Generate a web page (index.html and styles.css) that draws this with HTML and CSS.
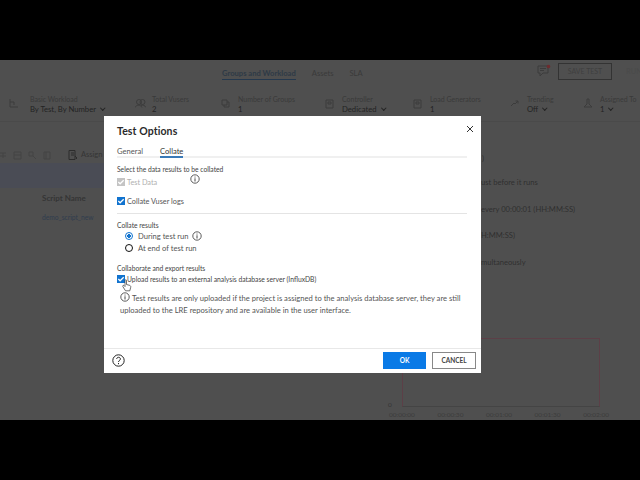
FILE: index.html
```html
<!DOCTYPE html>
<html lang="en">
<head>
<meta charset="utf-8">
<title>Test Options</title>
<link rel="stylesheet" href="styles.css">
</head>
<body>
<div class="frame">
  <div class="letterbox"></div>
  <main class="app">
    <header class="topbar">
      <nav class="nav">
        <span class="nav-item nav-active">Groups and Workload</span>
        <span class="nav-item">Assets</span>
        <span class="nav-item">SLA</span>
      </nav>
      <div class="top-actions">
        <svg class="chat" width="16" height="14" viewBox="0 0 16 14"><path class="ln" d="M1 2h10v7H6l-3 3V9H1z"/><path class="ln" d="M3 4.500h6M3 6.500h4" stroke-width=".7"/><circle cx="11.500" cy="2.500" r="1.800" fill="#6e2b2e"/></svg>
        <span class="save">SAVE TEST</span>
        <span class="more">RUN</span>
      </div>
    </header>
    <section class="summary">
      <div class="stat stat-a"><svg width="9" height="9" viewBox="0 0 9 9"><path class="ln" d="M1 0v8h8M1 3h4v3"/></svg><div><small>Basic Workload</small><b>By Test, By Number<i class="chev"></i></b></div></div>
      <div class="stat stat-b"><svg width="11" height="9" viewBox="0 0 11 9"><circle class="ln" cx="4" cy="3" r="2.500"/><circle class="ln" cx="7.500" cy="3" r="2.500"/><path class="ln" d="M0 8.500c1-3 6-3 7 0M6 6.500c2-1 4 0 5 2"/></svg><div><small>Total Vusers</small><b>2</b></div></div>
      <div class="stat stat-c"><svg width="9" height="9" viewBox="0 0 9 9"><path class="ln" d="M1 1h5v5H1zM3 6v2h5V3H6"/></svg><div><small>Number of Groups</small><b>1</b></div></div>
      <div class="stat stat-d"><svg width="9" height="10" viewBox="0 0 9 10"><path class="ln" d="M1 1h7v8H1zM3 3h3v2H3z"/></svg><div><small>Controller</small><b>Dedicated<i class="chev"></i></b></div></div>
      <div class="stat stat-e"><svg width="9" height="10" viewBox="0 0 9 10"><path class="ln" d="M1 1h7v8H1zM3 3h3v2H3z"/></svg><div><small>Load Generators</small><b>1</b></div></div>
      <div class="stat stat-f"><svg width="9" height="9" viewBox="0 0 9 9"><path class="ln" d="M1 7l3-3 1 1 3-3M5.500 2H8v2.500"/></svg><div><small>Trending</small><b>Off<i class="chev"></i></b></div></div>
      <div class="stat stat-g"><svg width="10" height="11" viewBox="0 0 10 11"><path class="ln" d="M4 1h2v5l3 3H1l3-3z"/></svg><div><small>Assigned To</small><b>1<i class="chev"></i></b></div></div>
    </section>
    <section class="workspace">
      <div class="left-pane">
        <div class="tools">
          <svg class="tool-faint" width="55" height="9" viewBox="0 0 55 9"><path class="ln" d="M0 2h6M0 5h6M3 2v5M14 1h7v7h-7zM14 4h7M29 1h4v4h-4zM33 5l3 3M44 1h6v7h-6zM46 1v7"/></svg>
          <svg class="tool-icon" width="10" height="10" viewBox="0 0 10 10"><path class="ln ln-strong" d="M1 0.500h6v9H1zM3 3h3M3 5h3M7 6l2 2-1 1"/></svg>
          <span class="assign">Assign LG</span>
        </div>
        <div class="band"></div>
        <div class="th">Script Name</div>
        <div class="td">demo_script_new</div>
      </div>
      <div class="right-pane">
        <p class="line l1">)</p>
        <p class="line l2">ust before it runs</p>
        <p class="line l3">every 00:00:01 (HH:MM:SS)</p>
        <p class="line l4">H:MM:SS)</p>
        <p class="line l5">multaneously</p>
        <div class="chart-box">
          <span class="zero">0</span>
          <div class="plot"></div>
          <div class="axis"><span>00:00:00</span><span>00:00:30</span><span>00:01:00</span><span>00:01:30</span><span>00:02:00</span></div>
        </div>
      </div>
    </section>
  </main>
  <div class="letterbox"></div>

  <div class="modal">
    <div class="modal-head">
      <h1>Test Options</h1>
      <svg class="close" width="8" height="8" viewBox="0 0 8 8"><path d="M1 1l6 6M7 1L1 7" stroke="#333" stroke-width="1"/></svg>
    </div>
    <div class="tabs"><span class="tab">General</span><span class="tab tab-on">Collate</span></div>
    <div class="modal-body">
      <p class="label">Select the data results to be collated</p>
      <div class="row row-test"><span class="check check-off"><svg width="8" height="8" viewBox="0 0 9 9"><path d="M1.500 4.500l2 2 4-4" fill="none" stroke="#fff" stroke-width="1.400"/></svg></span><span class="muted">Test Data</span>
        <svg class="info info-test" width="10" height="10" viewBox="0 0 10 10"><circle cx="5" cy="5" r="4.200" fill="none" stroke="#333" stroke-width=".8"/><path d="M5 2.600v.9M5 4.300v3.200" stroke="#333" stroke-width=".9"/></svg></div>
      <div class="row row-logs"><span class="check"><svg width="8" height="8" viewBox="0 0 9 9"><path d="M1.500 4.500l2 2 4-4" fill="none" stroke="#fff" stroke-width="1.400"/></svg></span><span>Collate Vuser logs</span></div>
      <hr class="rule">
      <p class="label">Collate results</p>
      <div class="radios">
        <div class="radio-row"><span class="radio radio-on"></span><span>During test run</span><svg class="info info-run" width="10" height="10" viewBox="0 0 10 10"><circle cx="5" cy="5" r="4.200" fill="none" stroke="#333" stroke-width=".8"/><path d="M5 2.600v.9M5 4.300v3.200" stroke="#333" stroke-width=".9"/></svg></div>
        <div class="radio-row"><span class="radio"></span><span>At end of test run</span></div>
      </div>
      <p class="label label-collab">Collaborate and export results</p>
      <div class="row row-upload"><span class="check"><svg width="8" height="8" viewBox="0 0 9 9"><path d="M1.500 4.500l2 2 4-4" fill="none" stroke="#fff" stroke-width="1.400"/></svg></span><span class="upload-text">Upload results to an external analysis database server (InfluxDB)</span>
        <svg class="cursor" width="10" height="13" viewBox="0 0 10 13"><path d="M3 1.500c0-1 1.500-1 1.500 0v4l3 .8c1 .3 1.500 1 1.200 2l-.9 3.500H3.500L.8 7.500c-.5-.9.6-1.600 1.300-.9l.9.9z" fill="#fff" stroke="#333" stroke-width=".7"/></svg></div>
      <p class="note"><svg class="note-icon" width="10" height="10" viewBox="0 0 10 10"><circle cx="5" cy="5" r="4.200" fill="none" stroke="#333" stroke-width=".8"/><path d="M5 2.600v.9M5 4.300v3.200" stroke="#333" stroke-width=".9"/></svg>Test results are only uploaded if the project is assigned to the analysis database server, they are still uploaded to the LRE repository and are available in the user interface.</p>
    </div>
    <div class="modal-foot">
      <svg class="help" width="13" height="13" viewBox="0 0 13 13"><circle cx="6.500" cy="6.500" r="5.700" fill="none" stroke="#222" stroke-width="1"/><path d="M4.700 5c0-2.300 3.700-2.300 3.700 0 0 1.400-1.900 1.500-1.900 3" fill="none" stroke="#222"/><path d="M6.500 9v1.200" stroke="#222"/></svg>
      <div class="buttons"><button class="btn btn-ok">OK</button><button class="btn btn-cancel">CANCEL</button></div>
    </div>
  </div>
</div>
</body>
</html>
```

FILE: styles.css
```css
* { box-sizing: border-box; }
html, body { margin: 0; padding: 0; }
body { width: 640px; height: 480px; overflow: hidden; background: #000; font-family: Lato, "Liberation Sans", sans-serif; color: #333; }
.frame { position: relative; width: 640px; height: 480px; display: flex; flex-direction: column; }
.letterbox { height: 60px; background: #000; flex: none; }
.app { height: 360px; background: #4f4f4f; color: #353535; display: flex; flex-direction: column; overflow: hidden; }
.ln { fill: none; stroke: #3c3c3c; stroke-width: 1; }
.ln-strong { stroke: #2c2c2c; }

.topbar { height: 26px; display: flex; justify-content: space-between; align-items: center; font-size: 7.600px; }
.nav { display: flex; gap: 16px; margin-left: 222px; margin-top: -2px; }
.nav-item { padding: 3px 0 1px; color: #3a3a3a; }
.nav-active { border-bottom: 1px solid #24384e; font-weight: 700; color: #2e3a46; }
.top-actions { display: flex; align-items: center; margin-right: -16px; margin-top: -4px; }
.chat { margin-right: 5px; }
.save { width: 54px; height: 17px; border: 1px solid #333; font-size: 7px; color: #3f3f3f; display: flex; align-items: center; justify-content: center; }
.more { width: 30px; margin-left: 14px; color: #4a4a4a; font-size: 7.500px; }

.summary { height: 36px; display: flex; align-items: center; border-bottom: 1px solid #4a4a4a; }
.stat { display: flex; align-items: center; gap: 8px; flex: none; }
.stat small { display: block; font-size: 7px; line-height: 10px; color: #3a3a3a; white-space: nowrap; }
.stat b { display: block; font-size: 7.700px; font-weight: 400; line-height: 10px; color: #232323; white-space: nowrap; }
.chev { display: inline-block; width: 3.500px; height: 3.500px; margin: 0 2px 2px 5px; border-right: 1px solid #232323; border-bottom: 1px solid #232323; transform: rotate(45deg); }
.stat-a { margin-left: 9px; width: 126px; gap: 12px; }
.stat-b { width: 86px; gap: 6px; }
.stat-c { width: 104px; gap: 8px; }
.stat-d { width: 88px; gap: 8px; }
.stat-e { width: 97px; gap: 8px; }
.stat-f { width: 73px; gap: 8px; }
.stat-g { width: 70px; gap: 7px; }

.workspace { flex: 1; display: flex; }
.left-pane { width: 104px; flex: none; font-size: 8px; overflow: hidden; }
.tools { height: 41px; display: flex; align-items: flex-end; padding-bottom: 3px; }
.tool-faint { margin: 0 13px 0 0; opacity: .55; flex: none; }
.tool-icon { margin: 0 3px 0 0; flex: none; }
.assign { white-space: nowrap; font-size: 7.500px; line-height: 10px; }
.band { height: 25px; background: #4a4c55; }
.th { margin: 4px 0 0 42px; font-weight: 700; white-space: nowrap; line-height: 12px; }
.td { margin: 9px 0 0 42px; font-size: 6.700px; color: #2f3d4e; white-space: nowrap; }

.right-pane { flex: 1; position: relative; font-size: 7.600px; }
.line { position: absolute; margin: 0; white-space: nowrap; line-height: 12px; color: #303030; }
.l1 { left: 378px; top: 30px; }
.l2 { left: 377px; top: 54px; }
.l3 { left: 377px; top: 81px; }
.l4 { left: 377px; top: 107px; }
.l5 { left: 377px; top: 134px; }
.chart-box { position: absolute; left: 285px; top: 216px; width: 240px; height: 86px; }
.plot { position: absolute; left: 13px; top: 0; width: 198px; height: 69px; border: 1px solid #5c3f47; border-bottom-color: #444; }
.zero { position: absolute; left: -1px; top: 63px; font-size: 6.500px; }
.axis { position: absolute; left: 0; top: 72px; width: 220px; display: flex; justify-content: space-between; font-size: 6.500px; line-height: 10px; color: #3c3c3c; }

.modal { position: absolute; left: 104px; top: 116px; width: 377px; height: 257px; background: #fff; display: flex; flex-direction: column; }
.modal-head { height: 28px; display: flex; align-items: flex-start; justify-content: space-between; padding: 7px 7px 0 13px; }
.modal-head h1 { margin: 0; font-size: 10.500px; font-weight: 700; line-height: 16px; color: #2a2a2a; letter-spacing: .1px; }
.close { margin-top: 2px; }
.tabs { margin: 0 14px 0 13px; height: 14px; display: flex; gap: 17px; border-bottom: 2px solid #f0f0f0; font-size: 7.600px; line-height: 14px; color: #555; }
.tab { height: 14px; }
.tab-on { color: #333; border-bottom: 2px solid #3a7ab8; }
.modal-body { flex: 1; padding: 6px 14px 0 13px; font-size: 7.600px; color: #555; }
.label { margin: 0; font-size: 6.700px; line-height: 10px; color: #444; }
.row { display: flex; align-items: center; gap: 2px; position: relative; }
.row-test { height: 12px; margin-top: 2px; font-size: 7.300px; }
.row-logs { height: 12px; margin-top: 7px; font-size: 7.300px; }
.check { width: 8px; height: 8px; background: #1173cf; display: flex; align-items: center; justify-content: center; flex: none; }
.check-off { background: #c4c4c4; }
.muted { color: #b0b0b0; }
.info { flex: none; }
.info-test { position: absolute; left: 73px; top: -2px; }
.info-run { margin-left: -2px; }
.rule { height: 1px; border: 0; background: #e4e4e4; margin: 6px 0; }
.radios { padding-left: 8px; }
.radio-row { display: flex; align-items: center; gap: 5px; height: 12px; }
.radio { width: 8px; height: 8px; border-radius: 50%; border: 1.500px solid #111; flex: none; }
.radio-on { border-color: #1173cf; background: radial-gradient(circle, #1173cf 45%, #fff 50%); }
.label-collab { margin-top: 9px; }
.row-upload { height: 10px; margin-top: 1px; font-size: 6.750px; color: #444; }
.upload-text { white-space: nowrap; }
.cursor { position: absolute; left: 5px; top: 5px; }
.note { margin: 8px 0 0 3px; font-size: 7.600px; line-height: 12px; color: #555; }
.note-icon { vertical-align: -1px; margin-right: 2px; }
.modal-foot { height: 25px; border-top: 1px solid #e8e8e8; display: flex; align-items: center; justify-content: space-between; padding: 0 5px 1px 8px; }
.buttons { display: flex; gap: 6px; }
.btn { height: 17px; font: 700 6.500px Lato, "Liberation Sans", sans-serif; padding: 0; }
.btn-ok { width: 43px; background: #0a7ae6; color: #fff; border: 0; }
.btn-cancel { width: 44px; background: #fff; color: #444; border: 1px solid #888; }
```
